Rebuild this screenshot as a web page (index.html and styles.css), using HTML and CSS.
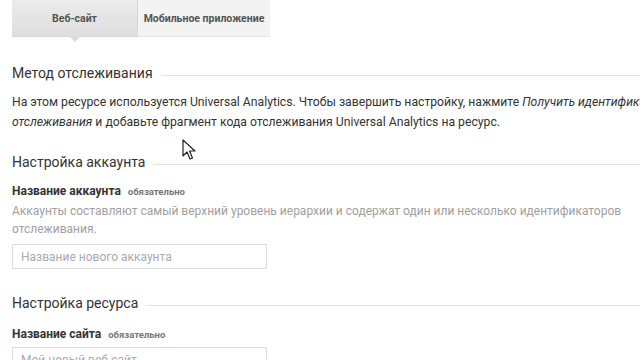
FILE: index.html
```html
<!DOCTYPE html>
<html lang="ru">
<head>
    <meta charset="UTF-8">
    <title>Новый аккаунт</title>
    <link rel="stylesheet" href="styles.css">
</head>
<body>
    <div class="tabs">
        <div class="tab tab-activa">Веб-сайт</div>
        <div class="tab">Мобильное приложение</div>
    </div>

    <h2 class="seccion">Метод отслеживания</h2>
    <p class="texto">
        На этом ресурсе используется Universal Analytics. Чтобы завершить настройку, нажмите <em>Получить идентификатор<br>
        отслеживания</em> и добавьте фрагмент кода отслеживания Universal Analytics на ресурс.
    </p>

    <h2 class="seccion">Настройка аккаунта</h2>
    <div class="campo">
        <label class="etiqueta">Название аккаунта <span class="req">обязательно</span></label>
        <div class="ayuda">Аккаунты составляют самый верхний уровень иерархии и содержат один или несколько идентификаторов<br>отслеживания.</div>
        <input class="entrada" type="text" placeholder="Название нового аккаунта">
    </div>

    <h2 class="seccion seccion-recurso">Настройка ресурса</h2>
    <div class="campo campo-sitio">
        <label class="etiqueta">Название сайта <span class="req">обязательно</span></label>
        <input class="entrada" type="text" placeholder="Мой новый веб-сайт">
    </div>

    <svg class="cursor" width="14" height="22" viewBox="0 0 14 22">
        <path d="M1 1 L1 17 L5 13 L8 20 L10.5 19 L7.5 12 L13 12 Z" fill="#fff" stroke="#222" stroke-width="1.2" stroke-linejoin="round"/>
    </svg>
</body>
</html>
```

FILE: styles.css
```css
body {
    font-family: Roboto, "Noto Sans", sans-serif;
    background-color: #fff;
    color: #333;
    margin: 0;
    padding: 0 12px;
    height: 360px;
    overflow: hidden;
}

.tabs {
    display: flex;
    height: 37px;
}

.tab {
    display: flex;
    align-items: center;
    justify-content: center;
    width: 132px;
    background-color: #f3f3f3;
    border-bottom: 1px solid #e4e4e4;
    font-size: 10.5px;
    font-weight: bold;
    color: #555;
    box-sizing: border-box;
}

.tab-activa {
    position: relative;
    width: 126px;
    background: linear-gradient(to bottom, #ececec, #dedede);
    border-right: 1px solid #d6d6d6;
    border-bottom-color: #d4d4d4;
}

    .tab-activa::after {
        content: "";
        position: absolute;
        left: 57px;
        top: 36px;
        border-left: 6px solid transparent;
        border-right: 6px solid transparent;
        border-top: 6px solid #dcdcdc;
    }

.seccion {
    display: flex;
    align-items: center;
    gap: 8px;
    margin: 26px 0 0;
    font-size: 14px;
    font-weight: normal;
    line-height: 20px;
    color: #333;
}

    .seccion::after {
        content: "";
        flex: 1;
        height: 1px;
        margin-top: 4px;
        margin-right: -12px;
        background-color: #e2e2e2;
    }

.texto {
    margin: 9px 0 0;
    font-size: 12.2px;
    line-height: 20px;
    color: #333;
    white-space: nowrap;
}

.texto em {
    font-style: italic;
}

.seccion + .campo {
    margin-top: 10px;
}

.texto + .seccion {
    margin-top: 20px;
}

.etiqueta {
    display: block;
    font-size: 12px;
    font-weight: bold;
    line-height: 18px;
    color: #333;
}

.req {
    margin-left: 4px;
    font-size: 9.5px;
    color: #777;
}

.ayuda {
    margin-top: 1px;
    font-size: 12px;
    line-height: 18px;
    color: #a0a0a0;
    white-space: nowrap;
}

.entrada {
    display: block;
    margin-top: 6px;
    width: 255px;
    height: 25px;
    box-sizing: border-box;
    padding: 0 8px;
    border: 1px solid #dcdcdc;
    font-family: inherit;
    font-size: 12px;
    color: #333;
}

    .entrada::placeholder {
        color: #aaa;
    }

.seccion-recurso {
    margin-top: 24px;
}

.campo-sitio {
    margin-top: 12px !important;
}

.campo-sitio .entrada {
    margin-top: 3px;
}

.cursor {
    position: absolute;
    left: 182px;
    top: 139px;
}
```
